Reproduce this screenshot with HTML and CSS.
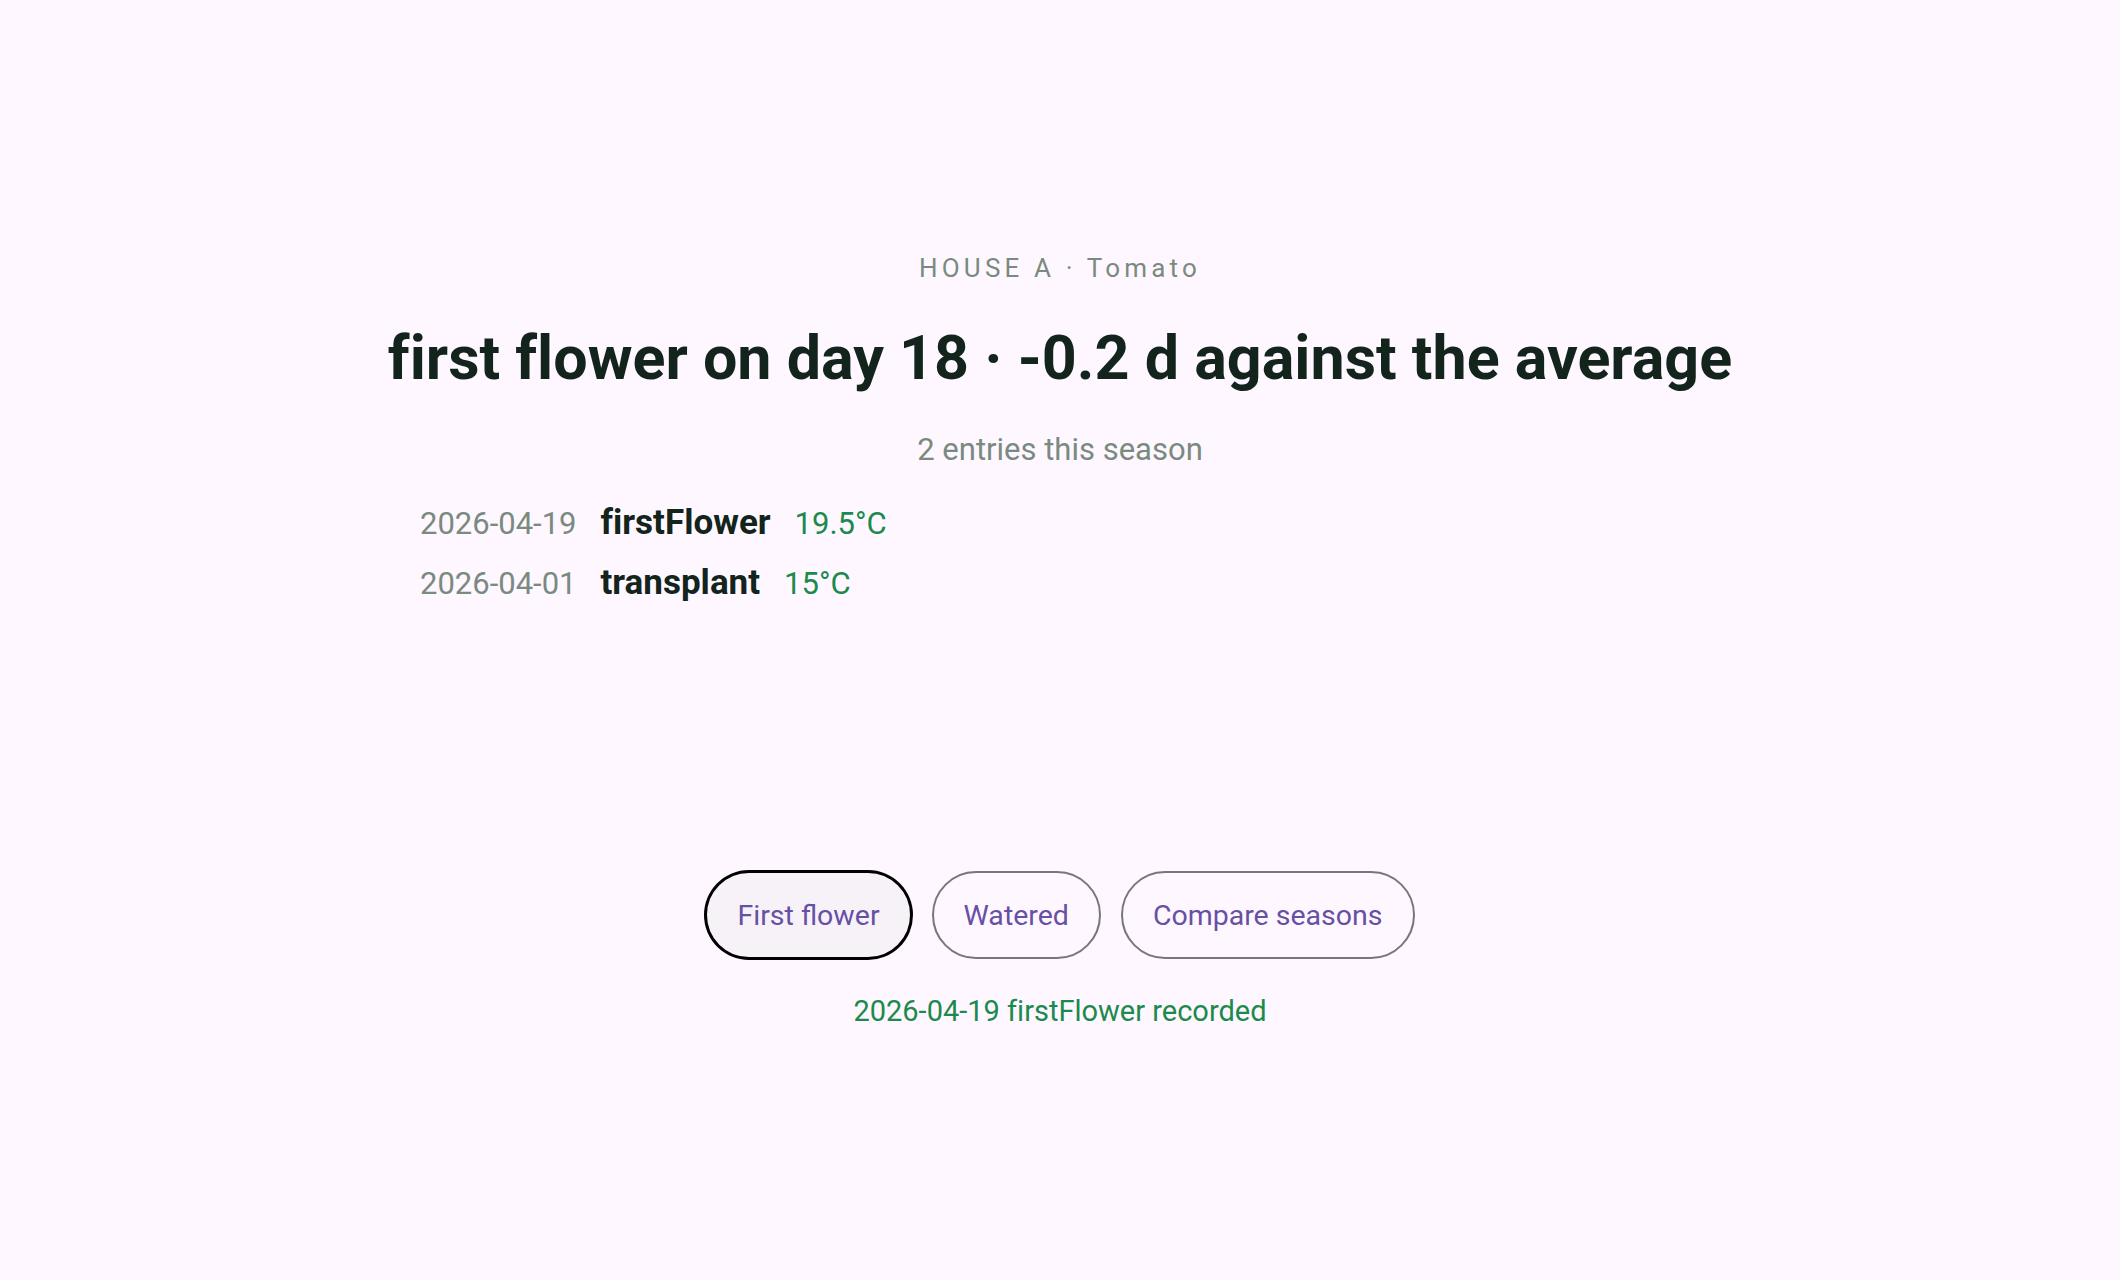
FILE: index.html
```html
<!DOCTYPE html>
<html lang="en">
  <head>
    <meta charset="UTF-8" />
    <meta name="viewport" content="width=device-width, initial-scale=1.0" />
    <title>House A · Tomato</title>
    <link rel="stylesheet" href="styles.css">
  </head>
  <body>
    <main class="season">
      <div class="eyebrow">HOUSE A · Tomato</div>
      <h1 class="headline">first flower on day 18 · -0.2 d against the average</h1>
      <p class="count">2 entries this season</p>
      <ul class="entries">
        <li class="entry">
          <span class="entry-date">2026-04-19</span>
          <span class="entry-name">firstFlower</span>
          <span class="entry-temp">19.5°C</span>
        </li>
        <li class="entry">
          <span class="entry-date">2026-04-01</span>
          <span class="entry-name">transplant</span>
          <span class="entry-temp">15°C</span>
        </li>
      </ul>
      <div class="actions">
        <button class="chip chip-focus">First flower</button>
        <button class="chip">Watered</button>
        <button class="chip">Compare seasons</button>
      </div>
      <p class="status">2026-04-19 firstFlower recorded</p>
    </main>
  </body>
</html>
```

FILE: styles.css
```css
html {
  margin: 0;
  padding: 0;
}
body {
  margin: 0;
  background: #fef7ff;
  font-family: Roboto, "Noto Sans", sans-serif;
  font-variant-ligatures: none;
  color: #12241b;
}
.season {
  display: flex;
  flex-direction: column;
  align-items: center;
  padding-top: 250px;
  text-align: center;
}
.eyebrow {
  font-size: 26px;
  line-height: 36px;
  letter-spacing: 0.16em;
  color: #7a8a7f;
}
.headline {
  margin: 36px 0 0;
  font-size: 61px;
  line-height: 72px;
  font-weight: 700;
}
.count {
  margin: 36px 0 0;
  font-size: 31px;
  line-height: 40px;
  color: #7a8a7f;
}
/* 记录列表 */
.entries {
  width: 1280px;
  margin: 32px 0 0;
  padding: 0;
  list-style: none;
  display: flex;
  flex-direction: column;
  gap: 16px;
}
.entry {
  display: flex;
  align-items: baseline;
  gap: 24px;
  font-size: 31px;
  line-height: 44px;
}
.entry-date {
  color: #7a8a7f;
}
.entry-name {
  font-size: 35px;
  line-height: 42px;
  font-weight: 700;
}
.entry-temp {
  color: #1b8a4c;
}
/* 按钮 */
.actions {
  margin-top: 265px;
  display: flex;
  gap: 20px;
}
.chip {
  box-sizing: border-box;
  height: 88px;
  padding: 0 30px;
  border: 2px solid #79747e;
  border-radius: 44px;
  background: transparent;
  color: #6750a4;
  font-family: inherit;
  font-size: 28.5px;
}
.chip:hover {
  cursor: pointer;
}
.chip-focus {
  border-color: #000;
  box-shadow: 0 0 0 1px #000;
  background: #f6f2f8;
}
.status {
  margin: 34px 0 0;
  font-size: 29px;
  line-height: 36px;
  color: #1b8a4c;
}
```
